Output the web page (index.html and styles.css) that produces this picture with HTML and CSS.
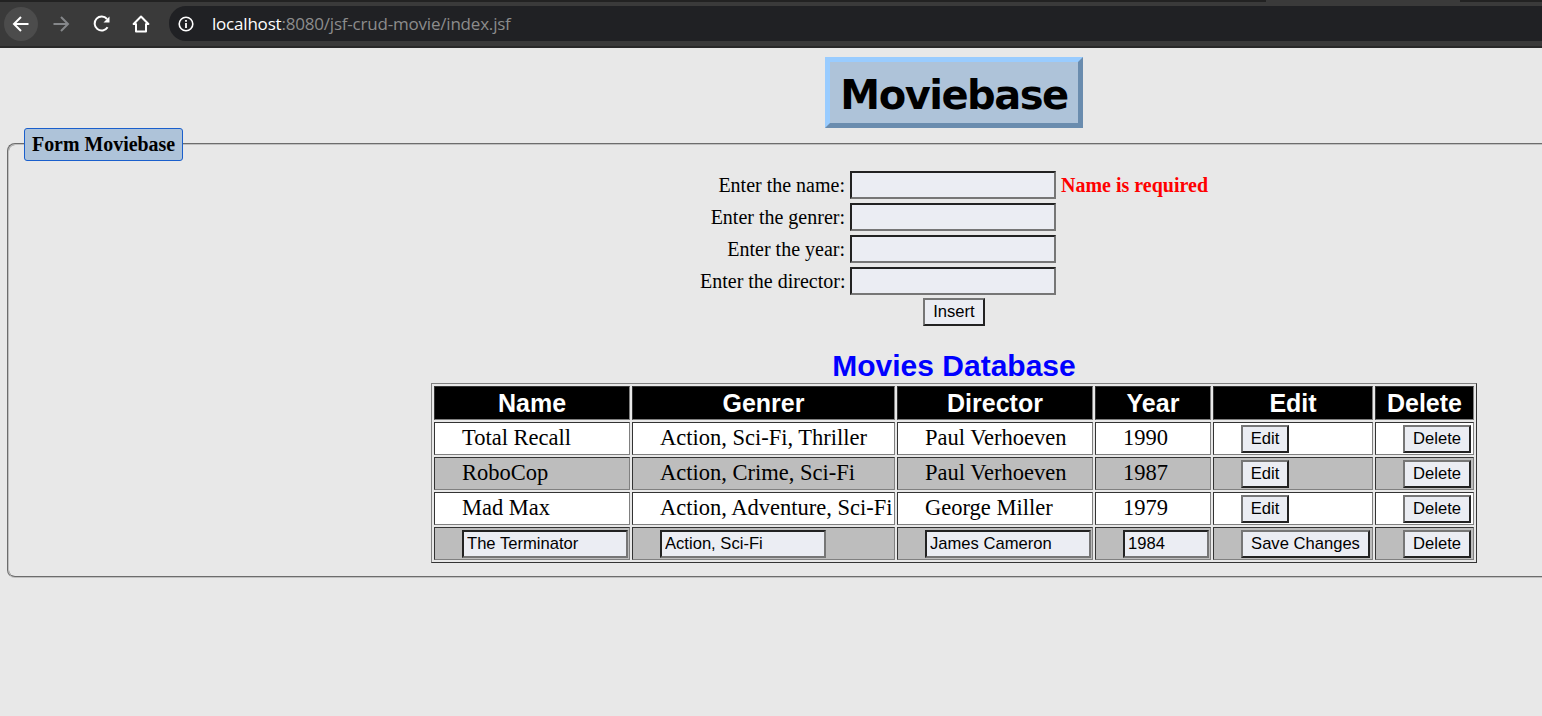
FILE: index.html
```html
<!DOCTYPE html>
<html lang="en">
<head>
    <meta charset="UTF-8">
    <meta name="viewport" content="width=device-width, initial-scale=1.0">
    <title>Moviebase</title>
    <link rel="stylesheet" href="styles.css">
</head>
<body>
    <header class="browser-bar">
        <div class="tab-strip"><span class="tab-edge"></span></div>
        <div class="toolbar">
            <span class="nav-btn nav-back">
                <svg width="20" height="20" viewBox="0 0 20 20" fill="none" stroke="#fff" stroke-width="2"><path d="M17.5 10H3M10 3l-7 7 7 7"/></svg>
            </span>
            <span class="nav-btn">
                <svg width="20" height="20" viewBox="0 0 20 20" fill="none" stroke="#85878a" stroke-width="2"><path d="M2.5 10H17M10 3l7 7-7 7"/></svg>
            </span>
            <span class="nav-btn nav-reload">
                <svg width="20" height="20" viewBox="0 0 20 20" fill="none" stroke="#fff" stroke-width="2"><path d="M15.6 13.2A7 7 0 1 1 15 5"/><path d="M17.5 2.5v6h-6z" fill="#fff" stroke="none"/></svg>
            </span>
            <span class="nav-btn">
                <svg width="20" height="20" viewBox="0 0 20 20" fill="none" stroke="#fff" stroke-width="2"><path d="M10 2.5 2.6 10H5v7.5h10V10h2.4z" stroke-linejoin="round"/></svg>
            </span>
            <div class="url-box">
                <svg class="info-icon" width="16" height="16" viewBox="0 0 16 16"><circle cx="8" cy="8" r="6.8" fill="none" stroke="#fff" stroke-width="1.6"/><path d="M7.1 7h1.8v5H7.1zM7.1 4h1.8v1.8H7.1z" fill="#fff"/></svg>
                <span class="url-host">localhost</span><span class="url-path">:8080/jsf-crud-movie/index.jsf</span>
            </div>
        </div>
    </header>

    <div class="page">
        <div class="title-wrap">
            <h1 class="page-title">Moviebase</h1>
        </div>

        <fieldset class="form-box">
            <legend>Form Moviebase</legend>

            <form class="movie-form">
                <label for="name">Enter the name:</label>
                <input type="text" id="name" class="field">
                <span class="error">Name is required</span>

                <label for="genrer">Enter the genrer:</label>
                <input type="text" id="genrer" class="field">
                <span></span>

                <label for="year">Enter the year:</label>
                <input type="text" id="year" class="field">
                <span></span>

                <label for="director">Enter the director:</label>
                <input type="text" id="director" class="field">
                <span></span>
            </form>
            <div class="insert-row"><button type="button" class="btn">Insert</button></div>

            <h2 class="table-title">Movies Database</h2>
            <table class="movies">
                <colgroup>
                    <col class="col-name">
                    <col class="col-genrer">
                    <col class="col-director">
                    <col class="col-year">
                    <col class="col-edit">
                    <col class="col-delete">
                </colgroup>
                <thead>
                    <tr>
                        <th>Name</th>
                        <th>Genrer</th>
                        <th>Director</th>
                        <th>Year</th>
                        <th>Edit</th>
                        <th>Delete</th>
                    </tr>
                </thead>
                <tbody>
                    <tr>
                        <td class="txt">Total Recall</td>
                        <td class="txt">Action, Sci-Fi, Thriller</td>
                        <td class="txt">Paul Verhoeven</td>
                        <td class="txt">1990</td>
                        <td><button type="button" class="btn btn-edit">Edit</button></td>
                        <td><button type="button" class="btn">Delete</button></td>
                    </tr>
                    <tr class="alt">
                        <td class="txt">RoboCop</td>
                        <td class="txt">Action, Crime, Sci-Fi</td>
                        <td class="txt">Paul Verhoeven</td>
                        <td class="txt">1987</td>
                        <td><button type="button" class="btn btn-edit">Edit</button></td>
                        <td><button type="button" class="btn">Delete</button></td>
                    </tr>
                    <tr>
                        <td class="txt">Mad Max</td>
                        <td class="txt">Action, Adventure, Sci-Fi</td>
                        <td class="txt">George Miller</td>
                        <td class="txt">1979</td>
                        <td><button type="button" class="btn btn-edit">Edit</button></td>
                        <td><button type="button" class="btn">Delete</button></td>
                    </tr>
                    <tr class="alt">
                        <td><input type="text" class="cell-input" value="The Terminator"></td>
                        <td><input type="text" class="cell-input" value="Action, Sci-Fi"></td>
                        <td><input type="text" class="cell-input" value="James Cameron"></td>
                        <td><input type="text" class="cell-input year-input" value="1984"></td>
                        <td><button type="button" class="btn btn-save">Save Changes</button></td>
                        <td><button type="button" class="btn">Delete</button></td>
                    </tr>
                </tbody>
            </table>
        </fieldset>
    </div>
</body>
</html>
```

FILE: styles.css
```css
body {
    margin: 0;
    background-color: #e8e8e8;
    font-family: "Liberation Serif", serif;
    overflow-x: hidden;
}

/* browser chrome */
.browser-bar {
    height: 48px;
    background-color: #3a3a3a;
    border-bottom: 2px solid #292929;
    box-sizing: border-box;
}
.tab-strip {
    height: 2px;
    background-color: #222;
    display: flex;
    justify-content: flex-end;
}
.tab-edge {
    width: 194px;
    margin-right: 82px;
    background-color: #3a3a3a;
}
.toolbar {
    display: flex;
    align-items: center;
    height: 43px;
    padding-left: 4px;
    box-sizing: border-box;
}
.nav-btn {
    width: 34px;
    height: 34px;
    margin-right: 6px;
    border-radius: 50%;
    display: flex;
    align-items: center;
    justify-content: center;
    flex-shrink: 0;
}
.nav-back {
    background-color: #4c4c4c;
}
.nav-reload svg {
    margin-left: 1px;
}
.url-box {
    flex: 1;
    height: 35px;
    margin-left: 5px;
    padding-left: 9px;
    display: flex;
    align-items: center;
    background-color: #202124;
    border-radius: 17px 0 0 17px;
    font-family: "Open Sans", sans-serif;
    font-size: 17px;
    letter-spacing: -0.2px;
}
.url-box span {
    margin-bottom: 1px;
}
.info-icon {
    margin-right: 18px;
}
.url-host {
    color: #fff;
}
.url-path {
    color: #8c8c8c;
}

/* page is wider than the window, like the original */
.page {
    width: 1908px;
}
.title-wrap {
    padding-top: 9px;
    margin-bottom: -1px;
    text-align: center;
}
.page-title {
    display: inline-block;
    margin: 0;
    width: 258px;
    height: 71px;
    line-height: 67px;
    box-sizing: border-box;
    font-family: "DejaVu Sans", sans-serif;
    font-size: 40px;
    font-weight: bold;
    letter-spacing: -1.5px;
    white-space: nowrap;
    background-color: #aec3d9;
    border: 5px solid;
    border-color: #99ccff #6a8cae #6a8cae #99ccff;
    vertical-align: top;
}

.form-box {
    margin: 0 7px;
    padding: 0 0 13px;
    border: 2px groove #c0c0c0;
    border-radius: 8px;
}
.form-box legend {
    position: relative;
    top: 1px;
    margin-left: 15px;
    padding: 0 7px;
    height: 33px;
    line-height: 31px;
    box-sizing: border-box;
    font-size: 19.9px;
    font-weight: bold;
    background-color: #aec3d9;
    border: 1px solid #1a5fcc;
    border-radius: 3px;
}

.movie-form {
    display: grid;
    grid-template-columns: 145px 206px 147px;
    column-gap: 5px;
    row-gap: 4px;
    justify-content: center;
    margin-top: 11px;
    font-size: 20px;
    align-items: center;
}
.movie-form label {
    text-align: right;
    white-space: nowrap;
}
.error {
    color: #ff0000;
    font-weight: bold;
    white-space: nowrap;
}
.field,
.cell-input {
    box-sizing: border-box;
    height: 28px;
    padding: 0 3px;
    background-color: #ebedf3;
    border: 2px solid;
    border-color: #222 #767676 #767676 #222;
    font-family: "Liberation Sans", sans-serif;
    font-size: 16.6px;
    color: #000;
    outline: none;
}
.field {
    width: 206px;
}
.cell-input {
    width: 166px;
    vertical-align: middle;
}
.year-input {
    width: 86px;
}
.btn {
    box-sizing: border-box;
    height: 28px;
    padding: 0 8px;
    background-color: #ebedf3;
    border: 2px solid;
    border-color: #767676 #222 #222 #767676;
    font-family: "Liberation Sans", sans-serif;
    font-size: 16.6px;
    color: #000;
    vertical-align: middle;
}
.btn-edit {
    width: 48px;
    padding: 0;
}
.btn-save {
    width: 129px;
}
.insert-row {
    margin-top: 3px;
    text-align: center;
}

.table-title {
    margin: 24px 0 0;
    height: 33px;
    line-height: 32px;
    text-align: center;
    font-family: "Liberation Sans", sans-serif;
    font-size: 30px;
    font-weight: bold;
    color: #0000ff;
}

.movies {
    width: 1046px;
    margin: 0 auto;
    table-layout: fixed;
    border-collapse: separate;
    border-spacing: 2px;
    border: 1px solid;
    border-color: #808080 #333 #333 #808080;
    box-sizing: border-box;
}
.col-name { width: 196px; }
.col-genrer { width: 263px; }
.col-director { width: 196px; }
.col-year { width: 116px; }
.col-edit { width: 160px; }
.col-delete { width: 99px; }

.movies th {
    height: 34px;
    padding: 0;
    box-sizing: border-box;
    background-color: #000;
    color: #fff;
    font-family: "Liberation Sans", sans-serif;
    font-size: 25px;
    font-weight: bold;
    text-align: center;
    border: 1px solid;
    border-color: #333 #808080 #808080 #333;
}
.movies td {
    height: 33px;
    padding: 0 0 0 27px;
    box-sizing: border-box;
    background-color: #fff;
    font-size: 22.5px;
    white-space: nowrap;
    overflow: hidden;
    border: 1px solid;
    border-color: #333 #808080 #808080 #333;
}
.movies td.txt {
    padding-bottom: 2px;
}
.movies .alt td {
    background-color: #bdbdbd;
}
```
